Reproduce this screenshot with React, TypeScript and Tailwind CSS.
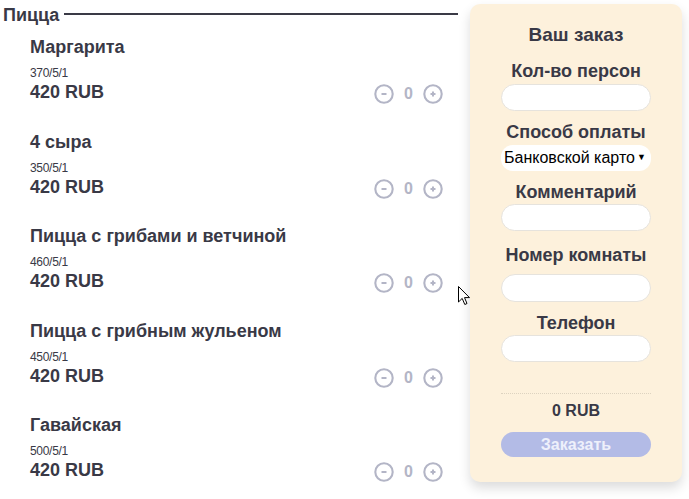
const pizzas = [
  { name: "Маргарита", weight: "370/5/1", price: "420 RUB" },
  { name: "4 сыра", weight: "350/5/1", price: "420 RUB" },
  { name: "Пицца с грибами и ветчиной", weight: "460/5/1", price: "420 RUB" },
  { name: "Пицца с грибным жульеном", weight: "450/5/1", price: "420 RUB" },
  { name: "Гавайская", weight: "500/5/1", price: "420 RUB" },
];

const font = { fontFamily: '"Liberation Sans", Arial, sans-serif' };

const RoundButton = ({ plus }: { plus?: boolean }) => (
  <svg width="20" height="20" viewBox="0 0 20 20" className="block shrink-0">
    <circle cx="10" cy="10" r="8.7" fill="none" stroke="#b3b5c6" strokeWidth="2.1" />
    <line x1="7.5" y1="10" x2="12.5" y2="10" stroke="#b3b5c6" strokeWidth="2" />
    {plus && <line x1="10" y1="7.5" x2="10" y2="12.5" stroke="#b3b5c6" strokeWidth="2" />}
  </svg>
);

const Field = ({ className = "" }: { className?: string }) => (
  <input
    type="text"
    className={`block w-[150px] h-[27px] rounded-full border border-[#e6e3dd] bg-white outline-none ${className}`}
  />
);

export default function App() {
  return (
    <div className="relative flex h-[499px] w-[689px] overflow-hidden bg-white text-[#393946]" style={font}>
      <div className="w-[458px] shrink-0">
        <div className="flex items-center pl-[3px] pt-[5px]">
          <h2 className="text-[18px] font-bold leading-5">Пицца</h2>
          <div className="ml-[5px] mb-[2px] h-[2px] flex-1 bg-[#3a3a46]" />
        </div>

        <div className="mt-[12px] pl-[30px] pr-[15px]">
          {pizzas.map((p) => (
            <div key={p.name} className="mb-[29.5px]">
              <h3 className="text-[18px] font-bold leading-5">{p.name}</h3>
              <div className="mt-[9px] text-[12px] leading-[14px] tracking-[-0.3px]">{p.weight}</div>
              <div className="mt-[2px] flex h-5 items-center justify-between">
                <span className="text-[18px] font-bold leading-5">{p.price}</span>
                <div className="flex translate-y-[2px] items-center">
                  <RoundButton />
                  <span className="w-[29px] text-center text-[16px] font-bold leading-5 text-[#b3b5c6]">0</span>
                  <RoundButton plus />
                </div>
              </div>
            </div>
          ))}
        </div>
      </div>

      <div className="ml-[12px] mt-[4px] flex h-[478px] w-[212px] flex-col items-center rounded-[10px] bg-[#fdf1dc] pt-[21px] shadow-[0_6px_12px_rgba(0,0,0,0.14)]">
        <div className="text-[19px] font-bold leading-5">Ваш заказ</div>

        <div className="mt-[16px] text-[18px] font-bold leading-5">Кол-во персон</div>
        <Field className="mt-[3px]" />

        <div className="mt-[11px] text-[18px] font-bold leading-5">Способ оплаты</div>
        <div className="mt-[3px] flex h-[26px] w-[150px] items-center rounded-[12px] bg-white pl-[3px] pr-[5px] text-[16px] text-black">
          <span className="w-[132px] overflow-hidden whitespace-nowrap">Банковской картой</span>
          <span className="ml-[2px] text-[9px]">▼</span>
        </div>

        <div className="mt-[11px] text-[18px] font-bold leading-5">Комментарий</div>
        <Field className="mt-[2px]" />

        <div className="mt-[14px] text-[18px] font-bold leading-5">Номер комнаты</div>
        <Field className="mt-[9px] h-[28px]" />

        <div className="mt-[11px] text-[18px] font-bold leading-5">Телефон</div>
        <Field className="mt-[2px]" />

        <div className="mt-[31px] w-[150px] border-t border-dotted border-[#ddd3c0]" />

        <div className="mt-[7px] text-[16px] font-bold leading-5">0 RUB</div>

        <button className="mt-[11px] h-[25px] w-[150px] rounded-full bg-[#b3bbe6] text-[16px] font-bold text-[#eef0fb]">
          Заказать
        </button>
      </div>

      <svg
        className="pointer-events-none absolute left-[458px] top-[286px]"
        width="13"
        height="20"
        viewBox="0 0 13 20"
      >
        <path
          d="M0.5 0.5 L0.5 16 L4.2 12.4 L6.8 18.5 L9 17.5 L6.5 11.6 L11.5 11.6 Z"
          fill="#fff"
          stroke="#000"
          strokeWidth="1"
          strokeLinejoin="round"
        />
      </svg>
    </div>
  );
}
